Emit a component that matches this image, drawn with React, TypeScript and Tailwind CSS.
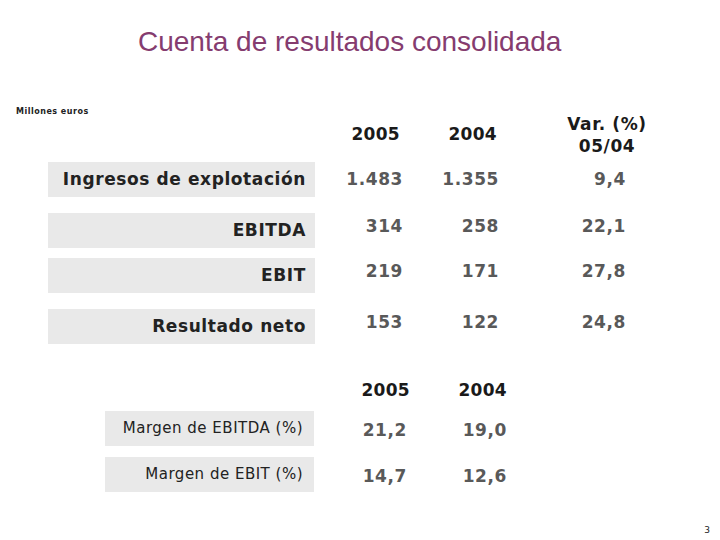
const verdana = "font-['DejaVu_Sans',sans-serif]";

type Row = { label: string; a: string; b: string; c: string; gap: string; lift: string };

const rows: Row[] = [
  { label: "Ingresos de explotación", a: "1.483", b: "1.355", c: "9,4", gap: "mt-[5px]", lift: "pb-0" },
  { label: "EBITDA", a: "314", b: "258", c: "22,1", gap: "mt-[16px]", lift: "pb-[8px]" },
  { label: "EBIT", a: "219", b: "171", c: "27,8", gap: "mt-[10px]", lift: "pb-[8px]" },
  { label: "Resultado neto", a: "153", b: "122", c: "24,8", gap: "mt-[16px]", lift: "pb-[8px]" },
];

const margins = [
  { label: "Margen de EBITDA (%)", a: "21,2", b: "19,0", gap: "mt-[9px]" },
  { label: "Margen de EBIT (%)", a: "14,7", b: "12,6", gap: "mt-[11px]" },
];

export default function App() {
  return (
    <div className={`w-[720px] h-[540px] bg-white flex flex-col ${verdana}`}>
      <h1 className="pt-[26px] pl-[138px] text-[28px] leading-[32px] text-[#853c6f] font-['Liberation_Sans',Arial,sans-serif]">
        Cuenta de resultados consolidada
      </h1>

      <div className="mt-[49px] pl-[16px] text-[8px] leading-[10px] font-bold tracking-[0.5px] text-[#222]">
        Millones euros
      </div>

      {/* cabecera */}
      <div className="mt-[-4px] flex items-center h-[44px] text-[17px] font-bold tracking-[0.3px] text-[#1a1a1a]">
        <div className="w-[315px]" />
        <div className="w-[85px] text-right">2005</div>
        <div className="w-[97px] text-right">2004</div>
        <div className="w-[220px] text-center leading-[22px] tracking-[0.6px]">
          Var. (%)
          <br />
          05/04
        </div>
      </div>

      {rows.map((r) => (
        <div key={r.label} className={`${r.gap} flex items-center h-[35px] text-[17px] font-bold tracking-[0.6px]`}>
          <div className="ml-[48px] w-[267px] h-full bg-[#e9e9e9] flex items-center justify-end pr-[9px] text-[#222]">
            {r.label}
          </div>
          <div className={`w-[88px] text-right text-[#595959] ${r.lift}`}>{r.a}</div>
          <div className={`w-[96px] text-right text-[#595959] ${r.lift}`}>{r.b}</div>
          <div className={`w-[127px] text-right text-[#595959] ${r.lift}`}>{r.c}</div>
        </div>
      ))}

      <div className="mt-[36px] flex items-center h-[22px] text-[17px] font-bold tracking-[0.3px] text-[#1a1a1a]">
        <div className="w-[314px]" />
        <div className="w-[96px] text-right">2005</div>
        <div className="w-[97px] text-right">2004</div>
      </div>

      {margins.map((m) => (
        <div key={m.label} className={`${m.gap} flex items-center h-[35px]`}>
          <div className="ml-[105px] w-[209px] h-full bg-[#e9e9e9] flex items-center justify-end pr-[11px] text-[15px] tracking-[0.5px] text-[#222]">
            {m.label}
          </div>
          <div className="w-[93px] text-right text-[17px] font-bold tracking-[0.6px] text-[#595959] pt-[5px]">{m.a}</div>
          <div className="w-[100px] text-right text-[17px] font-bold tracking-[0.6px] text-[#595959] pt-[5px]">{m.b}</div>
        </div>
      ))}

      <div className="mt-[33px] pr-[10px] text-right text-[9px] leading-[10px] text-[#222]">3</div>
    </div>
  );
}
